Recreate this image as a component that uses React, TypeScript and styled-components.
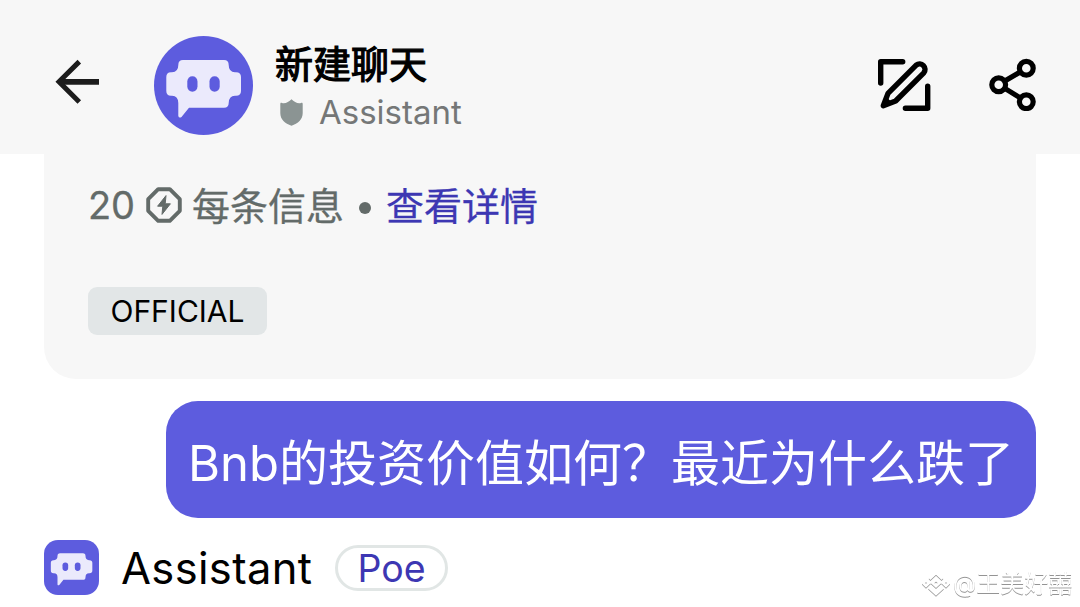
import styled, { createGlobalStyle } from 'styled-components';

const GlobalStyle = createGlobalStyle`
  * {
    box-sizing: border-box;
  }
  body {
    margin: 0;
    background: #ffffff;
    font-family: Inter, 'Noto Sans CJK SC', sans-serif;
    overflow: hidden;
  }
`;

const Screen = styled.main`
  position: relative;
  width: 1080px;
  height: 607px;
  overflow: hidden;
  display: flex;
  flex-direction: column;
  white-space: nowrap;

  svg {
    display: block;
    flex: none;
  }
`;

const Header = styled.header`
  height: 154px;
  flex: none;
  background: #f7f7f7;
  display: flex;
  align-items: flex-start;
  padding: 36px 42px 0 54px;
`;

const IconButton = styled.button<{ $top: number; $right?: number }>`
  margin: ${({ $top, $right = 0 }) => `${$top}px ${$right}px 0 0`};
  padding: 0;
  border: none;
  background: none;
  color: #000000;
`;

const Avatar = styled.div<{ $size: number; $radius: string }>`
  width: ${({ $size }) => $size}px;
  height: ${({ $size }) => $size}px;
  border-radius: ${({ $radius }) => $radius};
  background: #5d5cde;
  flex: none;
`;

const Heading = styled.div`
  flex: 1;
  padding-left: 22px;
`;

const Title = styled.h1`
  margin: 0;
  height: 56px;
  font-size: 38px;
  line-height: 56px;
  font-weight: 400;
  -webkit-text-stroke: 1.2px #000000;
  color: #000000;
`;

const Subtitle = styled.div`
  display: flex;
  align-items: center;
  height: 40px;
  padding-left: 5px;
  gap: 16px;
  font-size: 33px;
  line-height: 40px;
  color: #757777;
`;

const Card = styled.section`
  flex: none;
  height: 225px;
  margin: 0 44px;
  padding: 28px 44px 0;
  background: #f7f7f7;
  border-radius: 0 0 32px 32px;
`;

const PriceRow = styled.div`
  display: flex;
  align-items: center;
  height: 48px;
  font-size: 38px;
  line-height: 48px;
  color: #636b69;
  -webkit-text-stroke: 0.3px currentColor;
`;

const Price = styled.span`
  width: 58px;
  margin-top: -2px;
  letter-spacing: -0.2px;
`;

const PointsWrap = styled.span`
  margin-top: -2px;
`;

const PerMessage = styled.span`
  padding-left: 10px;
  width: 177px;
`;

const Dot = styled.span`
  width: 12px;
  height: 12px;
  margin: 3px 15px 0 0;
  border-radius: 50%;
  background: #636b69;
`;

const DetailLink = styled.a`
  color: #3d37b3;
`;

const Tag = styled.span`
  display: flex;
  align-items: center;
  justify-content: center;
  width: 179px;
  height: 48px;
  margin-top: 57px;
  border-radius: 9px;
  background: #e2e6e7;
  font-size: 30px;
  color: #000000;
`;

const Bubble = styled.div`
  align-self: flex-end;
  flex: none;
  width: 870px;
  height: 117px;
  margin: 22px 44px 0 0;
  padding-left: 22px;
  border-radius: 32px;
  background: #5d5cde;
  color: #ffffff;
  font-size: 49px;
  line-height: 125px;
`;

const Reply = styled.div`
  display: flex;
  align-items: center;
  height: 55px;
  margin: 22px 0 0 44px;
`;

const ReplyName = styled.span`
  width: 214px;
  margin-left: 22px;
  font-size: 43.5px;
  letter-spacing: 0.35px;
  color: #000000;
`;

const Maker = styled.span`
  display: flex;
  align-items: center;
  justify-content: center;
  width: 113px;
  height: 46px;
  border: 3px solid #e1e6e5;
  border-radius: 23px;
  font-size: 37.5px;
  line-height: 42px;
  padding-top: 2px;
  color: #3d37b3;
`;

const Watermark = styled.div`
  position: absolute;
  left: 922px;
  top: 568px;
  display: flex;
  align-items: center;
  height: 32px;
  gap: 3px;
  font-size: 24px;
  line-height: 32px;
  color: #ffffff;
  filter: drop-shadow(0 1px 0.5px rgba(0, 0, 0, 0.42));
`;

const BotFace = ({ size }: { size: number }) => (
  <svg width={size} height={size} viewBox="0 0 99 99">
    <path
      fill="#ebeafc"
      d="M29 24H70Q74.7 24 74.7 29Q74.7 36 81 36.3H82Q87 36.3 87 41V55Q87 59.7 82 59.7H81Q74.7 60 74.7 67Q74.7 71.7 70 71.7H35L27.5 81Q25 82.5 24.3 80V67Q24.3 60 18 59.7H17Q12.3 59.7 12.3 55V41Q12.3 36.3 17 36.3H18Q24.3 36 24.3 29Q24.3 24 29 24Z"
    />
    <rect x="33.3" y="40.3" width="10.2" height="15.4" rx="5.1" fill="#5d5cde" />
    <rect x="55.5" y="40.3" width="10.2" height="15.4" rx="5.1" fill="#5d5cde" />
  </svg>
);

const BackIcon = () => (
  <svg width="46" height="46" viewBox="0 0 46 46" fill="none" stroke="#1c1c1c">
    <path d="M25.3 2.6L5 22.7L25.3 43" strokeWidth="5" />
    <path d="M5 22.8H45" strokeWidth="5.8" />
  </svg>
);

const ComposeIcon = () => (
  <svg width="54" height="54" viewBox="0 0 54 54" fill="none" stroke="#000" strokeWidth="5.4" strokeLinecap="round" strokeLinejoin="round">
    <path d="M3.7 26V4.7H25.7M50.7 29.3V51.3H28.4" />
    <path d="M39.2 8.2A5.4 5.4 0 0 1 46.8 15.8L18.6 44L6.3 48.8L11 36.4Z" />
    <path d="M6.3 48.8L9 41L14 46Z" fill="#000" strokeWidth="2" />
  </svg>
);

const ShareIcon = () => (
  <svg width="50" height="54" viewBox="0 0 50 54" fill="none" stroke="#000" strokeWidth="5.2">
    <circle cx="38.3" cy="11.3" r="6.9" />
    <circle cx="10.7" cy="27.7" r="6.9" />
    <circle cx="38.3" cy="44.7" r="6.9" />
    <path d="M16.8 24.1L32.2 14.9M16.8 31.4L32.2 40.9" />
  </svg>
);

const ShieldIcon = () => (
  <svg width="23" height="27" viewBox="0 0 23 27">
    <path fill="#8b9493" d="M11.5 0.3C9 3 5 5 2 4C1 3.6 0.3 4 0.3 5V14C0.3 20.5 5 24.5 11.5 26.7C18 24.5 22.7 20.5 22.7 14V5C22.7 4 22 3.6 21 4C18 5 14 3 11.5 0.3Z" />
  </svg>
);

const PointsIcon = () => (
  <svg width="36" height="36" viewBox="0 0 36 36">
    <path
      d="M12.2 2.2H23.8L33.8 12.2V23.8L23.8 33.8H12.2L2.2 23.8V12.2Z"
      fill="none"
      stroke="#636b69"
      strokeWidth="3.9"
      strokeLinejoin="round"
    />
    <path d="M20 8.6L11.6 19.2H16.8L16 27.4L24.4 16.8H19.2Z" fill="#636b69" stroke="#636b69" strokeLinejoin="round" />
  </svg>
);

const DiamondIcon = () => (
  <svg width="28" height="28" viewBox="0 0 28 28" fill="none" stroke="#fff" strokeWidth="2.6">
    <path d="M7.5 9L14 3L20.5 9M1 13L4 10.5L7 13L4 16ZM21 13L24 10.5L27 13L24 16ZM10.5 13L14 9.8L17.5 13L14 16.2ZM7 17.5L14 24L21 17.5" />
  </svg>
);

export default function App() {
  return (
    <>
      <GlobalStyle />
      <Screen>
        <Header>
          <IconButton $top={23} $right={54} aria-label="Back">
            <BackIcon />
          </IconButton>
          <Avatar $size={99} $radius="50%">
            <BotFace size={99} />
          </Avatar>
          <Heading>
            <Title>新建聊天</Title>
            <Subtitle>
              <ShieldIcon />
              <span>Assistant</span>
            </Subtitle>
          </Heading>
          <IconButton $top={21} $right={57} aria-label="New chat">
            <ComposeIcon />
          </IconButton>
          <IconButton $top={21} aria-label="Share">
            <ShareIcon />
          </IconButton>
        </Header>

        <Card>
          <PriceRow>
            <Price>20</Price>
            <PointsWrap>
              <PointsIcon />
            </PointsWrap>
            <PerMessage>每条信息</PerMessage>
            <Dot />
            <DetailLink>查看详情</DetailLink>
          </PriceRow>
          <Tag>OFFICIAL</Tag>
        </Card>

        <Bubble>Bnb的投资价值如何？最近为什么跌了</Bubble>

        <Reply>
          <Avatar $size={55} $radius="14px">
            <BotFace size={55} />
          </Avatar>
          <ReplyName>Assistant</ReplyName>
          <Maker>Poe</Maker>
        </Reply>

        <Watermark>
          <DiamondIcon />
          <span>@王美好囍</span>
        </Watermark>
      </Screen>
    </>
  );
}
